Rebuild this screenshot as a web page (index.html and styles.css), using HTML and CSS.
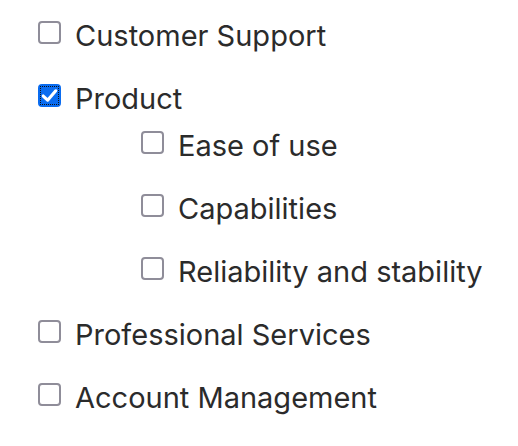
FILE: index.html
```html
<!DOCTYPE html>
<html lang="en">
<head>
<meta charset="utf-8">
<link rel="stylesheet" href="styles.css">
</head>
<body>
<ul class="list">
  <li class="item">
    <div class="row"><span class="box"></span><span class="label">Customer Support</span></div>
  </li>
  <li class="item">
    <div class="row"><span class="box checked"><svg viewBox="0 0 22 22" class="tick"><path d="M5 11.5 L9.2 15.5 L17 6.5" fill="none" stroke="#fff" stroke-width="3" stroke-linecap="round" stroke-linejoin="round"/></svg></span><span class="label">Product</span></div>
    <ul class="list sub">
      <li class="item"><div class="row"><span class="box"></span><span class="label">Ease of use</span></div></li>
      <li class="item"><div class="row"><span class="box"></span><span class="label">Capabilities</span></div></li>
      <li class="item"><div class="row"><span class="box"></span><span class="label">Reliability and stability</span></div></li>
    </ul>
  </li>
  <li class="item">
    <div class="row"><span class="box"></span><span class="label">Professional Services</span></div>
  </li>
  <li class="item">
    <div class="row"><span class="box"></span><span class="label">Account Management</span></div>
  </li>
</ul>
</body>
</html>
```
FILE: styles.css
```css
html, body {
  margin: 0;
  padding: 0;
  background: #fff;
}
body {
  font-family: Inter, Roboto, "Liberation Sans", Arial, sans-serif;
  color: #2b2b2b;
}
.list {
  list-style: none;
  margin: 0;
  padding: 12px 0 0 38px;
  display: flex;
  flex-direction: column;
  gap: 16px;
}
.list.sub {
  margin-left: -38px;
  padding: 0 0 0 141px;
}
.item {
  display: flex;
  flex-direction: column;
}
.row {
  height: 47px;
  display: flex;
  align-items: center;
}
.box {
  box-sizing: border-box;
  width: 23px;
  height: 23px;
  border: 2.5px solid #8f8d99;
  border-radius: 4px;
  margin-right: 14px;
  margin-bottom: 6px;
  flex: none;
  position: relative;
}
.box.checked {
  background: #0a6cf0;
  border-color: #0a6cf0;
}
.box.checked::after {
  content: "";
  position: absolute;
  inset: 0;
  border: 1.5px dotted #111;
}
.tick {
  position: absolute;
  left: -2.5px;
  top: -2.5px;
  width: 23px;
  height: 23px;
}
.label {
  font-size: 29px;
  line-height: 1;
}
```
